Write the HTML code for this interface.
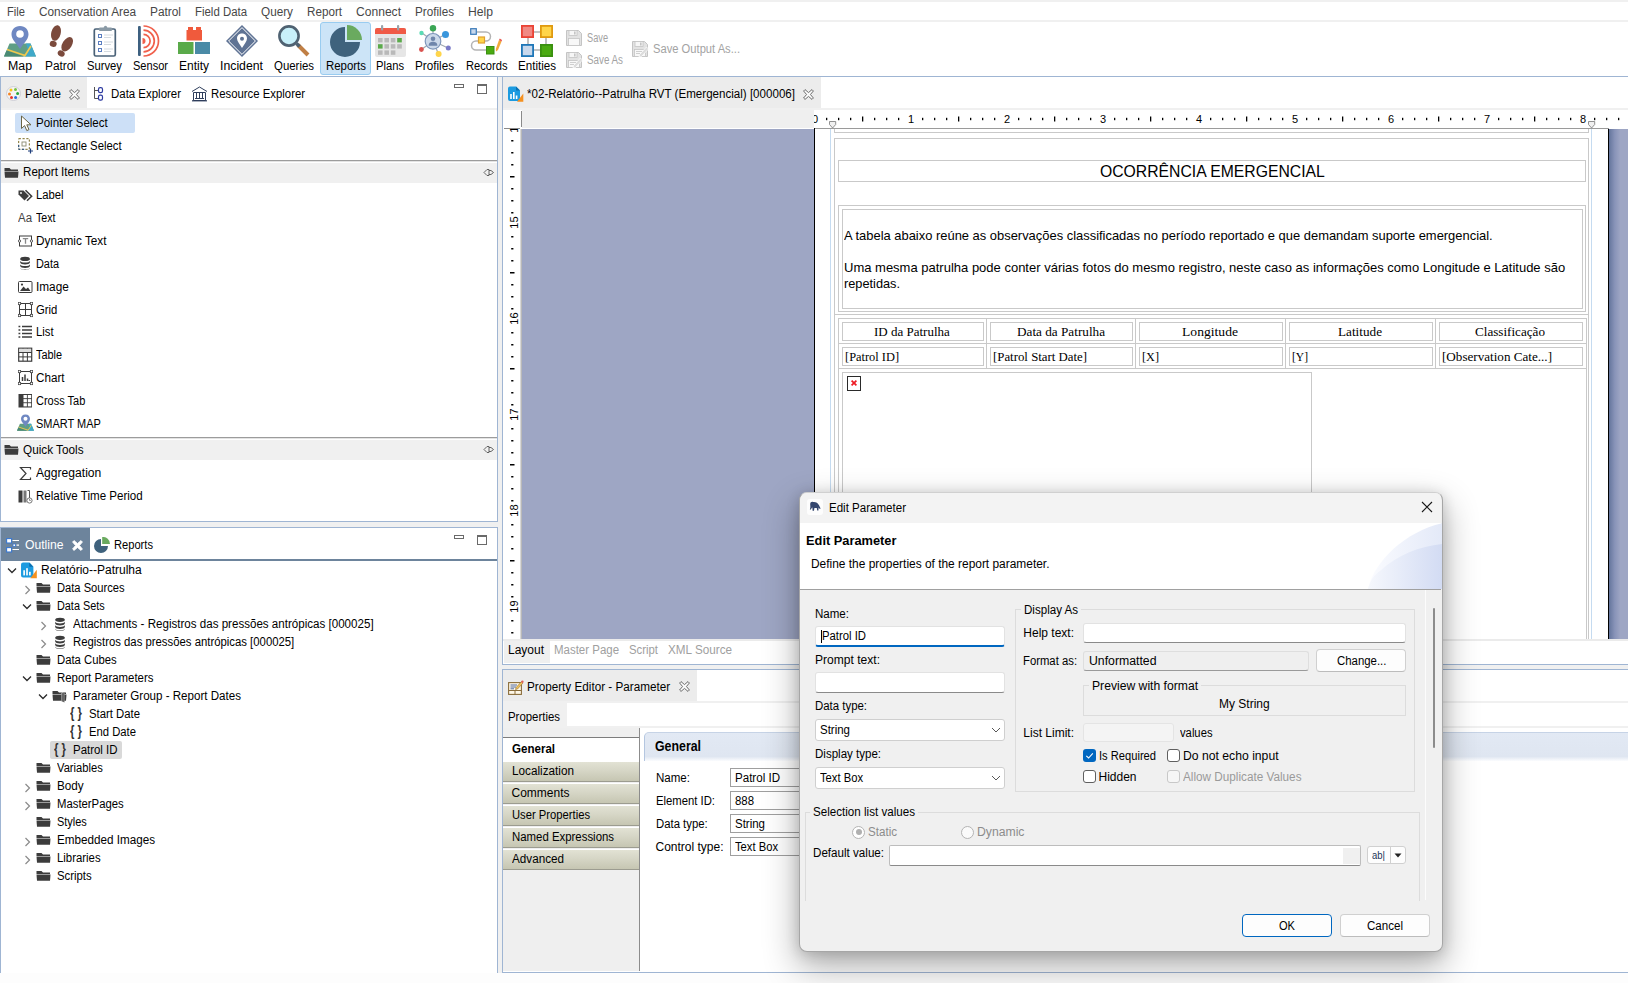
<!DOCTYPE html>
<html><head><meta charset="utf-8"><title>SMART</title><style>
html,body{margin:0;padding:0}
body{width:1628px;height:983px;overflow:hidden;background:#f0f0f0;font-family:"Liberation Sans",sans-serif;font-size:12px;color:#000;position:relative}
.b{position:absolute;display:block}
.t{position:absolute;white-space:nowrap;line-height:1;transform-origin:0 0;display:block}
</style></head>
<body>
<div class="b" style="left:0px;top:973px;width:1628px;height:10px;background:#fdfdfd"></div>
<div class="b" style="left:0px;top:2px;width:1628px;height:18px;background:#fff"></div>
<div class="b" style="left:0px;top:22px;width:1628px;height:54px;background:#fff"></div>
<div class="b" style="left:0px;top:76px;width:1628px;height:1px;background:#9fb5d3"></div>
<span class="t" style="left:7px;top:6px;color:#474747;transform:scaleX(0.931);">File</span>
<span class="t" style="left:39px;top:6px;color:#474747;transform:scaleX(0.983);">Conservation Area</span>
<span class="t" style="left:150px;top:6px;color:#474747;transform:scaleX(0.989);">Patrol</span>
<span class="t" style="left:195px;top:6px;color:#474747;transform:scaleX(0.951);">Field Data</span>
<span class="t" style="left:261px;top:6px;color:#474747;transform:scaleX(0.979);">Query</span>
<span class="t" style="left:307px;top:6px;color:#474747;transform:scaleX(0.972);">Report</span>
<span class="t" style="left:356px;top:6px;color:#474747;transform:scaleX(1.007);">Connect</span>
<span class="t" style="left:415px;top:6px;color:#474747;transform:scaleX(0.975);">Profiles</span>
<span class="t" style="left:468px;top:6px;color:#474747;transform:scaleX(1.013);">Help</span>
<div class="b" style="left:320px;top:22px;width:51px;height:53px;background:#cce4f7;border:1px solid #99ccf0;border-radius:3px;box-sizing:border-box"></div>
<span class="t" style="left:8px;top:60px;transform:scaleX(1.028);">Map</span>
<span class="t" style="left:45px;top:60px;transform:scaleX(0.989);">Patrol</span>
<span class="t" style="left:87px;top:60px;transform:scaleX(0.937);">Survey</span>
<span class="t" style="left:133px;top:60px;transform:scaleX(0.921);">Sensor</span>
<span class="t" style="left:179px;top:60px;">Entity</span>
<span class="t" style="left:220px;top:60px;transform:scaleX(1.023);">Incident</span>
<span class="t" style="left:274px;top:60px;transform:scaleX(0.952);">Queries</span>
<span class="t" style="left:326px;top:60px;transform:scaleX(0.952);">Reports</span>
<span class="t" style="left:376px;top:60px;transform:scaleX(0.933);">Plans</span>
<span class="t" style="left:415px;top:60px;transform:scaleX(0.975);">Profiles</span>
<span class="t" style="left:465.5px;top:60px;transform:scaleX(0.929);">Records</span>
<span class="t" style="left:518px;top:60px;transform:scaleX(0.966);">Entities</span>
<svg class="b" style="left:4px;top:25px;" width="32" height="32" viewBox="0 0 32 32"><path d="M0 31.5 L5.5 18.5 H26.5 L32 31.5 Z" fill="#5f9e86"/><path d="M22 18.5 H26.5 L32 31.5 H21 L24 25 Z" fill="#3fa9c9"/><path d="M0 31.5 L2.5 25.5 L20 31.5 Z" fill="#4a8a74"/><path d="M3 24.5 L21 30.5 L27 21" fill="none" stroke="#f2c94c" stroke-width="1.7"/><path d="M16 1 C10.5 1 7.5 5 7.5 9.5 C7.5 14.5 13 19 16 24 C19 19 24.5 14.5 24.5 9.5 C24.5 5 21.5 1 16 1 Z" fill="#6f88c2"/><circle cx="16" cy="9" r="3.8" fill="#fff"/></svg>
<svg class="b" style="left:49px;top:25px;" width="24" height="32" viewBox="0 0 24 32"><g fill="#7b4a3c"><ellipse cx="7" cy="8" rx="4.7" ry="8" transform="rotate(14 7 8)"/><ellipse cx="4.2" cy="18.8" rx="3.5" ry="3" transform="rotate(14 4.2 18.8)"/><ellipse cx="18.2" cy="19.3" rx="4.7" ry="8" transform="rotate(32 18.2 19.3)"/><ellipse cx="12.2" cy="28.5" rx="3.6" ry="3" transform="rotate(32 12.2 28.5)"/></g></svg>
<svg class="b" style="left:90px;top:25px;" width="32" height="32" viewBox="0 0 32 32"><rect x="4.3" y="4" width="21" height="27" rx="1.5" fill="#fff" stroke="#4a6278" stroke-width="1.7"/><rect x="9" y="2.5" width="13" height="3.5" rx="1" fill="#8a9aa6"/><circle cx="15.5" cy="2.3" r="1.6" fill="#8a9aa6"/><g fill="#fff" stroke="#5b7ec0" stroke-width="1"><rect x="8.5" y="9.5" width="3" height="3"/><rect x="8.5" y="16.5" width="3" height="3"/><rect x="8.5" y="23.5" width="3" height="3"/></g><g stroke="#d5dbe0" stroke-width="1"><path d="M14 10h9M14 12.5h7M14 17h9M14 19.5h7M14 24h9M14 26.5h7"/></g></svg>
<svg class="b" style="left:138px;top:25px;" width="22" height="32" viewBox="0 0 22 32"><rect x="0" y="1" width="2.8" height="30" rx="1" fill="#3d6080"/><g fill="none" stroke="#f0604c" stroke-width="1.7"><path d="M5.5 1 A15 15 0 0 1 5.5 31"/><path d="M5.5 5.2 A10.8 10.8 0 0 1 5.5 26.8"/><path d="M5.5 9.4 A6.6 6.6 0 0 1 5.5 22.6"/></g><path d="M4.5 13 A3 3 0 0 1 4.5 19 Z" fill="#f0604c"/></svg>
<svg class="b" style="left:178px;top:27px;" width="32" height="27" viewBox="0 0 32 27"><rect x="8.5" y="3" width="15.5" height="10.5" fill="#f05a3c"/><rect x="10" y="0" width="5" height="4" fill="#f05a3c"/><rect x="18" y="0" width="5" height="4" fill="#f05a3c"/><rect x="0" y="15" width="15.5" height="12" fill="#5aaa4a"/><rect x="17" y="15" width="15" height="12" fill="#4a8aa6"/></svg>
<svg class="b" style="left:226px;top:25px;" width="32" height="32" viewBox="0 0 32 32"><path d="M16 0 L32 16 L16 32 L0 16 Z" fill="#5f7394"/><path d="M16 2.6 L29.4 16 L16 29.4 L2.6 16 Z" fill="none" stroke="#fff" stroke-width="1"/><path d="M16 8.5 C12.8 8.5 11 10.8 11 13.5 C11 16.5 14 19.5 16 23 C18 19.5 21 16.5 21 13.5 C21 10.8 19.2 8.5 16 8.5 Z" fill="#fff"/><circle cx="16" cy="13.8" r="2" fill="#5f7394"/></svg>
<svg class="b" style="left:278px;top:25px;" width="32" height="32" viewBox="0 0 32 32"><path d="M20 20 L30 30" stroke="#c07f45" stroke-width="4" stroke-linecap="butt"/><path d="M18.5 18.5 L21.5 21.5" stroke="#4f6272" stroke-width="3.5"/><circle cx="11" cy="11" r="9.6" fill="#c8f0fa" stroke="#4f6272" stroke-width="2.6"/></svg>
<svg class="b" style="left:330px;top:25px;" width="32" height="32" viewBox="0 0 32 32"><path d="M15 17 L15 2 A15 15 0 1 0 30 17 Z" fill="#3f627d"/><path d="M17 15 L17 0 A15 15 0 0 1 32 15 Z" fill="#6aaa5f"/></svg>
<svg class="b" style="left:375px;top:25px;" width="31" height="32" viewBox="0 0 31 32"><rect x="0" y="3" width="31" height="29" rx="2" fill="#e6e6e6"/><path d="M0 9 V5 a2 2 0 0 1 2 -2 H29 a2 2 0 0 1 2 2 V9 Z" fill="#f05a46"/><rect x="6" y="0" width="2.2" height="5.5" rx="1" fill="#9aa3aa"/><rect x="22" y="0" width="2.2" height="5.5" rx="1" fill="#9aa3aa"/><rect x="3" y="13" width="4.6" height="4.4" fill="#b9b9b9"/><rect x="9.4" y="13" width="4.6" height="4.4" fill="#b9b9b9"/><rect x="15.8" y="13" width="4.6" height="4.4" fill="#b9b9b9"/><rect x="22.2" y="13" width="4.6" height="4.4" fill="#5aaa4a"/><rect x="3" y="19.2" width="4.6" height="4.4" fill="#5aaa4a"/><rect x="9.4" y="19.2" width="4.6" height="4.4" fill="#b9b9b9"/><rect x="15.8" y="19.2" width="4.6" height="4.4" fill="#b9b9b9"/><rect x="22.2" y="19.2" width="4.6" height="4.4" fill="#b9b9b9"/><rect x="3" y="25.4" width="4.6" height="4.4" fill="#b9b9b9"/><rect x="9.4" y="25.4" width="4.6" height="4.4" fill="#b9b9b9"/><rect x="15.8" y="25.4" width="4.6" height="4.4" fill="#b9b9b9"/></svg>
<svg class="b" style="left:419px;top:25px;" width="32" height="32" viewBox="0 0 32 32"><g stroke="#a0a8b0" stroke-width="1.2"><path d="M14 16 L14 4M14 16 L26 9.5M14 16 L29 23M14 16 L19.5 29M14 16 L2.5 24.5M14 16 L3 8"/></g><circle cx="14" cy="3.2" r="3.2" fill="#3aa655"/><circle cx="26.5" cy="9.6" r="3.5" fill="#3a96dc"/><circle cx="29.3" cy="23" r="2.5" fill="#7a7ac8"/><circle cx="19.6" cy="29" r="3" fill="#ffd54a"/><circle cx="2.4" cy="24.5" r="2.4" fill="#d9534f"/><circle cx="2.5" cy="8" r="2.2" fill="#5adbb5"/><circle cx="14" cy="16.3" r="7.8" fill="#ccd9ea" stroke="#7d96bb" stroke-width="1.2"/><circle cx="14" cy="13.7" r="2.3" fill="#6f86ab"/><path d="M9.6 20.8 C9.6 17.4 12 16.7 14 16.7 C16 16.7 18.4 17.4 18.4 20.8 Z" fill="#6f86ab"/></svg>
<svg class="b" style="left:470px;top:27.5px;" width="32" height="27" viewBox="0 0 32 27"><path d="M7 4 H16 a4.5 4.5 0 0 1 0 9 H6 a4.5 4.5 0 0 0 0 9 H18" fill="none" stroke="#b4b4b4" stroke-width="1.5"/><rect x="0.7" y="0.7" width="5.6" height="5.6" fill="#c8d8ec" stroke="#3a7ab8" stroke-width="1.2"/><rect x="8.5" y="9" width="6" height="6" fill="#ffd54a" stroke="#e0a030" stroke-width="1.2"/><rect x="16.5" y="18.5" width="7.5" height="7.5" fill="#4aaa10" stroke="#3a9010" stroke-width="1"/><path d="M29 12 L31.5 13.5 L28 22 L26 23.5 L25.8 21 Z" fill="#f2a93b"/><path d="M29 12 L31.5 13.5 L32 12 L29.8 10.6 Z" fill="#e8534a"/></svg>
<svg class="b" style="left:521px;top:25px;" width="32" height="32" viewBox="0 0 32 32"><g stroke="#b0b0b0" stroke-width="1.6"><path d="M7 7 H25M7 25 H25M7 7 V25M25 7 V25"/></g><rect x="0.9" y="0.9" width="11.2" height="11.2" fill="#f08a84" stroke="#ea4335" stroke-width="1.8"/><rect x="19.9" y="0.9" width="11.2" height="11.2" fill="#ffd54a" stroke="#e09a10" stroke-width="1.8"/><rect x="0.9" y="19.9" width="11.2" height="11.2" fill="#c8d8ec" stroke="#1f77b8" stroke-width="1.8"/><rect x="19.9" y="19.9" width="11.2" height="11.2" fill="#4aaa10" stroke="#3a9010" stroke-width="1.8"/></svg>
<svg class="b" style="left:566px;top:30px;" width="16" height="16" viewBox="0 0 16 16"><path d="M0.5 0.5 H12.5 L15.5 3.5 V15.5 H0.5 Z" fill="#e2e2e2" stroke="#c4c4c4"/><rect x="3" y="0.5" width="8" height="5" fill="#f6f6f6" stroke="#c4c4c4" stroke-width="0.8"/><rect x="8" y="1.5" width="1.6" height="3" fill="#c4c4c4"/><rect x="2.5" y="8.5" width="11" height="7" fill="#f8f8f8" stroke="#c4c4c4" stroke-width="0.8"/></svg>
<svg class="b" style="left:566px;top:52px;" width="17" height="16" viewBox="0 0 17 16"><path d="M0.5 0.5 H12.5 L15.5 3.5 V15.5 H0.5 Z" fill="#e2e2e2" stroke="#c4c4c4"/><rect x="3" y="0.5" width="8" height="5" fill="#f6f6f6" stroke="#c4c4c4" stroke-width="0.8"/><rect x="8" y="1.5" width="1.6" height="3" fill="#c4c4c4"/><rect x="2.5" y="8.5" width="11" height="7" fill="#f8f8f8" stroke="#c4c4c4" stroke-width="0.8"/><path d="M14.5 6 L16.5 8 L9.5 15.5 L7 16 L7.5 13.5 Z" fill="#dcdcdc" stroke="#fff" stroke-width="0.7"/><path d="M4 10.5h6M4 12.5h4" stroke="#c4c4c4" stroke-width="0.8"/></svg>
<svg class="b" style="left:632px;top:41px;" width="17" height="16" viewBox="0 0 17 16"><path d="M0.5 0.5 H12.5 L15.5 3.5 V15.5 H0.5 Z" fill="#e2e2e2" stroke="#c4c4c4"/><rect x="3" y="0.5" width="8" height="5" fill="#f6f6f6" stroke="#c4c4c4" stroke-width="0.8"/><rect x="8" y="1.5" width="1.6" height="3" fill="#c4c4c4"/><rect x="2.5" y="8.5" width="11" height="7" fill="#f8f8f8" stroke="#c4c4c4" stroke-width="0.8"/><path d="M14.5 6 L16.5 8 L9.5 15.5 L7 16 L7.5 13.5 Z" fill="#dcdcdc" stroke="#fff" stroke-width="0.7"/><path d="M4 10.5h6M4 12.5h4" stroke="#c4c4c4" stroke-width="0.8"/></svg>
<span class="t" style="left:587px;top:32px;color:#a3a3a3;transform:scaleX(0.768);">Save</span>
<span class="t" style="left:587px;top:54px;color:#a3a3a3;transform:scaleX(0.818);">Save As</span>
<span class="t" style="left:652.5px;top:43px;color:#a3a3a3;transform:scaleX(0.932);">Save Output As...</span>
<div class="b" style="left:0px;top:77px;width:498px;height:445px;background:#fff;border:1px solid #9fb5d3;border-top:none;box-sizing:border-box"></div>
<div class="b" style="left:1px;top:77px;width:86px;height:31px;background:#ececec"></div>
<div class="b" style="left:1px;top:108px;width:496px;height:2px;background:#f0f0f0"></div>
<svg class="b" style="left:6px;top:86px;" width="15" height="15" viewBox="0 0 15 15"><circle cx="7.5" cy="7.5" r="7" fill="#f4f4f4" stroke="#c8c8d0" stroke-width="0.8"/><circle cx="5" cy="4" r="1.5" fill="#f5c518"/><circle cx="9.5" cy="3.6" r="1.5" fill="#7ac143"/><circle cx="11.6" cy="7.6" r="1.5" fill="#2aa83a"/><circle cx="3.5" cy="8" r="1.5" fill="#f58220"/><circle cx="5.5" cy="11.6" r="1.5" fill="#e5352b"/><circle cx="9.6" cy="11.6" r="1.5" fill="#2a6fdb"/></svg>
<span class="t" style="left:25px;top:88px;transform:scaleX(0.964);">Palette</span>
<svg class="b" style="left:68.5px;top:89px;" width="11" height="11" viewBox="0 0 11 11"><path d="M0.6 2 L2 0.6 L5.5 3.6 L9 0.6 L10.4 2 L7.4 5.5 L10.4 9 L9 10.4 L5.5 7.4 L2 10.4 L0.6 9 L3.6 5.5 Z" fill="#fff" stroke="#5a5a5a" stroke-width="0.9" stroke-linejoin="round"/></svg>
<svg class="b" style="left:93px;top:86px;" width="12" height="15" viewBox="0 0 12 15"><path d="M1.5 1 V12.5 H5M1.5 4.5 H5" fill="none" stroke="#555" stroke-width="1"/><rect x="5.5" y="1.7" width="4" height="5" rx="1.6" fill="#fff" stroke="#2d3aa0" stroke-width="1.2"/><rect x="5.5" y="9.2" width="4" height="5" rx="1.6" fill="#fff" stroke="#2d3aa0" stroke-width="1.2"/></svg>
<span class="t" style="left:111px;top:88px;transform:scaleX(0.954);">Data Explorer</span>
<svg class="b" style="left:191px;top:85px;" width="17" height="17" viewBox="0 0 17 17"><path d="M1 6.5 L8.5 2 L16 6.5" fill="none" stroke="#2f3e5c" stroke-width="1"/><path d="M2.5 7.5 H14.5 V15.5 H2.5 Z M5.5 8 V13M8.5 8 V13M11.5 8 V13M4 13.5 H13" fill="none" stroke="#2f3e5c" stroke-width="1"/><path d="M1 15.8 H16" stroke="#2f3e5c" stroke-width="1.2"/></svg>
<span class="t" style="left:211px;top:88px;transform:scaleX(0.946);">Resource Explorer</span>
<div class="b" style="left:454px;top:84px;width:10px;height:4px;border:1px solid #6a6a6a;box-sizing:border-box"></div>
<div class="b" style="left:477px;top:84px;width:10px;height:10px;border:1px solid #6a6a6a;border-top-width:2px;box-sizing:border-box"></div>
<div class="b" style="left:15px;top:113px;width:120px;height:20px;background:#cde0f7;border-radius:2px"></div>
<svg class="b" style="left:20px;top:115px;" width="12" height="17" viewBox="0 0 12 17"><path d="M1.5 1 V13.5 L4.6 10.6 L6.8 15.6 L9 14.6 L6.8 9.8 H11 Z" fill="#fff" stroke="#6b6545" stroke-width="1"/></svg>
<span class="t" style="left:36.3px;top:117px;transform:scaleX(0.960);">Pointer Select</span>
<svg class="b" style="left:18px;top:138px;" width="16" height="17" viewBox="0 0 16 17"><rect x="0.7" y="0.7" width="10.6" height="10.6" fill="none" stroke="#7a6a20" stroke-width="1" stroke-dasharray="2.2 1.6"/><path d="M0.7 7 V11.3 H8" fill="none" stroke="#1f4e8c" stroke-width="1" stroke-dasharray="2.2 1.6"/><rect x="4" y="4" width="4" height="4" fill="#fff" stroke="#8a8a70" stroke-width="0.9"/><path d="M12.5 10.5 V15.5M10 13 H15" stroke="#1f3e7c" stroke-width="1.2"/></svg>
<span class="t" style="left:36.3px;top:140px;transform:scaleX(0.943);">Rectangle Select</span>
<div class="b" style="left:1px;top:160px;width:496px;height:1px;background:#9c9c9c"></div>
<div class="b" style="left:1px;top:161px;width:496px;height:1px;background:#e3e3e3"></div>
<div class="b" style="left:1px;top:163px;width:496px;height:20px;background:#f0f0f0"></div>
<svg class="b" style="left:3.5px;top:165px;" width="16" height="16" viewBox="0 0 16 16"><path d="M0.5 3 H5.5 L7 4.5 H14 V6 H0.5 Z" fill="#3c3c3c"/><path d="M0.5 6.5 H14.5 L14 12.7 H1 Z" fill="#3c3c3c"/></svg>
<span class="t" style="left:22.5px;top:166px;transform:scaleX(0.968);">Report Items</span>
<svg class="b" style="left:483px;top:168px;" width="12" height="9" viewBox="0 0 12 9"><path d="M1 4.5 L4 1.5 H6 V7.5 H4 Z M6 2.5 H8 L10.5 4.5 L8 6.5 H6" fill="none" stroke="#555" stroke-width="0.9"/></svg>
<span class="t" style="left:36.3px;top:189px;transform:scaleX(0.940);">Label</span>
<svg class="b" style="left:18px;top:187px;" width="15" height="16" viewBox="0 0 15 16"><path d="M0.5 3.5 H5.5 L11 9 L6.5 13.5 L0.5 7.5 Z" fill="#3c3c3c"/><path d="M7.5 3.2 L13.6 9.2 L9 13.8" fill="none" stroke="#3c3c3c" stroke-width="1.6"/><circle cx="3" cy="6" r="0.9" fill="#fff"/></svg>
<span class="t" style="left:36.3px;top:212px;transform:scaleX(0.886);">Text</span>
<span class="t" style="left:18px;top:212px;color:#444;transform:scaleX(0.954);">Aa</span>
<span class="t" style="left:36.3px;top:235px;transform:scaleX(0.982);">Dynamic Text</span>
<svg class="b" style="left:18px;top:233px;" width="15" height="16" viewBox="0 0 15 16"><rect x="1.5" y="3" width="12" height="10" fill="#fff" stroke="#3c3c3c" stroke-width="1"/><path d="M4.8 5.6 H10.2 M7.5 5.6 V10.8" stroke="#888" stroke-width="1.3"/><circle cx="1.5" cy="8" r="1.2" fill="#fff" stroke="#3c3c3c" stroke-width="0.8"/><circle cx="13.5" cy="8" r="1.2" fill="#fff" stroke="#3c3c3c" stroke-width="0.8"/></svg>
<span class="t" style="left:36.3px;top:258px;transform:scaleX(0.908);">Data</span>
<svg class="b" style="left:18px;top:256px;" width="15" height="16" viewBox="0 0 17 18"><g fill="#3c3c3c"><ellipse cx="8" cy="3.2" rx="5.5" ry="2.4"/><path d="M2.5 5.2 C2.5 8 13.5 8 13.5 5.2 V7.4 C13.5 10.2 2.5 10.2 2.5 7.4 Z"/><path d="M2.5 9.2 C2.5 12 13.5 12 13.5 9.2 V11.4 C13.5 14.2 2.5 14.2 2.5 11.4 Z"/><path d="M2.5 13.2 C2.5 16 13.5 16 13.5 13.2 V13.6 C13.5 16.6 2.5 16.6 2.5 13.6 Z"/></g></svg>
<span class="t" style="left:36.3px;top:281px;transform:scaleX(0.984);">Image</span>
<svg class="b" style="left:18px;top:279px;" width="15" height="16" viewBox="0 0 15 16"><rect x="0.5" y="2.5" width="13.5" height="11" rx="1" fill="#fff" stroke="#3c3c3c" stroke-width="1"/><path d="M2 12 L5.5 7.5 L8 10 L10 8.5 L12.5 12 Z" fill="#3c3c3c"/><circle cx="4" cy="5.6" r="1.1" fill="#3c3c3c"/></svg>
<span class="t" style="left:36.3px;top:304px;transform:scaleX(0.939);">Grid</span>
<svg class="b" style="left:18px;top:302px;" width="15" height="16" viewBox="0 0 15 16"><path d="M1.5 1.5 H13.5 V13.5 H1.5 Z M7.5 1.5 V13.5 M1.5 7.5 H13.5" fill="none" stroke="#3c3c3c" stroke-width="1"/><rect x="0.30000000000000004" y="0.30000000000000004" width="2.4" height="2.4" fill="#fff" stroke="#3c3c3c" stroke-width="0.7"/><rect x="0.30000000000000004" y="12.3" width="2.4" height="2.4" fill="#fff" stroke="#3c3c3c" stroke-width="0.7"/><rect x="12.3" y="0.30000000000000004" width="2.4" height="2.4" fill="#fff" stroke="#3c3c3c" stroke-width="0.7"/><rect x="12.3" y="12.3" width="2.4" height="2.4" fill="#fff" stroke="#3c3c3c" stroke-width="0.7"/></svg>
<span class="t" style="left:36.3px;top:326px;transform:scaleX(0.943);">List</span>
<svg class="b" style="left:18px;top:324px;" width="15" height="16" viewBox="0 0 15 16"><path d="M4 2.5 H14 M4 6 H14 M4 9.5 H14 M4 13 H14" stroke="#3c3c3c" stroke-width="1.4"/><path d="M0.5 2.5 H2.3 M0.5 6 H2.3 M0.5 9.5 H2.3 M0.5 13 H2.3" stroke="#3c3c3c" stroke-width="1.4"/></svg>
<span class="t" style="left:36.3px;top:349px;transform:scaleX(0.906);">Table</span>
<svg class="b" style="left:18px;top:347px;" width="15" height="16" viewBox="0 0 15 16"><rect x="0.7" y="1.2" width="13" height="13" fill="#fff" stroke="#3c3c3c" stroke-width="1.2"/><path d="M5 1.2 V14.2 M9.4 1.2 V14.2 M0.7 5.5 H13.7 M0.7 9.9 H13.7" stroke="#3c3c3c" stroke-width="1"/><rect x="1.3" y="1.8" width="11.8" height="3.2" fill="#ddd"/></svg>
<span class="t" style="left:36.3px;top:372px;transform:scaleX(0.971);">Chart</span>
<svg class="b" style="left:18px;top:370px;" width="15" height="16" viewBox="0 0 15 16"><path d="M1.5 1.5 H13.5 V13.5 H1.5 Z" fill="none" stroke="#3c3c3c" stroke-width="1"/><path d="M4.5 11 V7 M7 11 V4.5 M9.5 11 V8.5 M11.3 11 V10" stroke="#3c3c3c" stroke-width="1.5"/><rect x="0.30000000000000004" y="0.30000000000000004" width="2.4" height="2.4" fill="#fff" stroke="#3c3c3c" stroke-width="0.7"/><rect x="0.30000000000000004" y="12.3" width="2.4" height="2.4" fill="#fff" stroke="#3c3c3c" stroke-width="0.7"/><rect x="12.3" y="0.30000000000000004" width="2.4" height="2.4" fill="#fff" stroke="#3c3c3c" stroke-width="0.7"/><rect x="12.3" y="12.3" width="2.4" height="2.4" fill="#fff" stroke="#3c3c3c" stroke-width="0.7"/></svg>
<span class="t" style="left:36.3px;top:395px;transform:scaleX(0.916);">Cross Tab</span>
<svg class="b" style="left:18px;top:393px;" width="15" height="16" viewBox="0 0 15 16"><rect x="0.5" y="1" width="13.5" height="13.5" fill="#3c3c3c"/><g fill="#fff"><rect x="5.5" y="2" width="3.4" height="3.2"/><rect x="9.8" y="2" width="3.4" height="3.2"/><rect x="5.5" y="6.1" width="3.4" height="3.2"/><rect x="9.8" y="6.1" width="3.4" height="3.2"/><rect x="5.5" y="10.2" width="3.4" height="3.2"/><rect x="9.8" y="10.2" width="3.4" height="3.2"/></g></svg>
<span class="t" style="left:36.3px;top:418px;transform:scaleX(0.914);">SMART MAP</span>
<svg class="b" style="left:17px;top:414px;" width="17" height="17" viewBox="3 0 26 32"><path d="M0 31.5 L5.5 18.5 H26.5 L32 31.5 Z" fill="#5f9e86"/><path d="M22 18.5 H26.5 L32 31.5 H21 L24 25 Z" fill="#3fa9c9"/><path d="M0 31.5 L2.5 25.5 L20 31.5 Z" fill="#4a8a74"/><path d="M3 24.5 L21 30.5 L27 21" fill="none" stroke="#f2c94c" stroke-width="1.7"/><path d="M16 1 C10.5 1 7.5 5 7.5 9.5 C7.5 14.5 13 19 16 24 C19 19 24.5 14.5 24.5 9.5 C24.5 5 21.5 1 16 1 Z" fill="#6f88c2"/><circle cx="16" cy="9" r="3.8" fill="#fff"/></svg>
<div class="b" style="left:1px;top:437px;width:496px;height:1px;background:#9c9c9c"></div>
<div class="b" style="left:1px;top:438px;width:496px;height:1px;background:#e3e3e3"></div>
<div class="b" style="left:1px;top:440px;width:496px;height:20px;background:#f0f0f0"></div>
<svg class="b" style="left:3.5px;top:442px;" width="16" height="16" viewBox="0 0 16 16"><path d="M0.5 3 H5.5 L7 4.5 H14 V6 H0.5 Z" fill="#3c3c3c"/><path d="M0.5 6.5 H14.5 L14 12.7 H1 Z" fill="#3c3c3c"/></svg>
<span class="t" style="left:22.5px;top:444px;transform:scaleX(0.979);">Quick Tools</span>
<svg class="b" style="left:483px;top:445px;" width="12" height="9" viewBox="0 0 12 9"><path d="M1 4.5 L4 1.5 H6 V7.5 H4 Z M6 2.5 H8 L10.5 4.5 L8 6.5 H6" fill="none" stroke="#555" stroke-width="0.9"/></svg>
<svg class="b" style="left:19px;top:466px;" width="13" height="15" viewBox="0 0 13 15"><path d="M11.5 3.5 V1.5 H1.5 L7 7.5 L1.5 13.5 H11.5 V11.5" fill="none" stroke="#3c3c3c" stroke-width="1.2"/></svg>
<span class="t" style="left:36.3px;top:467px;transform:scaleX(1.009);">Aggregation</span>
<svg class="b" style="left:18px;top:490px;" width="15" height="14" viewBox="0 0 15 14"><rect x="0.5" y="0.5" width="4" height="12" fill="#3c3c3c"/><rect x="5.5" y="0.5" width="3" height="12" fill="#777"/><path d="M9.5 0.5 H11.5 V8" fill="none" stroke="#555" stroke-width="1"/><circle cx="11.5" cy="10.5" r="2.6" fill="#fff" stroke="#666" stroke-width="0.9"/><path d="M11.5 9 V10.5 H12.8" stroke="#666" stroke-width="0.7" fill="none"/></svg>
<span class="t" style="left:36.3px;top:490px;transform:scaleX(0.964);">Relative Time Period</span>
<div class="b" style="left:0px;top:527px;width:498px;height:446px;background:#fff;border:1px solid #9fb5d3;border-bottom:none;box-sizing:border-box"></div>
<div class="b" style="left:1px;top:528px;width:89px;height:31px;background:#6d849c"></div>
<div class="b" style="left:1px;top:559px;width:496px;height:2px;background:#6d849c"></div>
<svg class="b" style="left:6px;top:538px;" width="14" height="15" viewBox="0 0 14 15"><rect x="0.6" y="0.6" width="5" height="4.4" fill="#fff" stroke="#3a78d0" stroke-width="1.1"/><rect x="0.6" y="9.6" width="5" height="4.4" fill="#fff" stroke="#3a78d0" stroke-width="1.1"/><rect x="7" y="6" width="2.4" height="2.4" fill="#fff" stroke="#3a78d0" stroke-width="0.8"/><path d="M6.5 2.5 H13 M10.5 7.2 H13 M6.5 11.5 H13" stroke="#fff" stroke-width="1.2"/></svg>
<span class="t" style="left:25px;top:539px;color:#fff;transform:scaleX(1.013);">Outline</span>
<svg class="b" style="left:72px;top:539.5px;" width="11" height="11" viewBox="0 0 11 11"><path d="M0.6 2 L2 0.6 L5.5 3.6 L9 0.6 L10.4 2 L7.4 5.5 L10.4 9 L9 10.4 L5.5 7.4 L2 10.4 L0.6 9 L3.6 5.5 Z" fill="#fff" stroke="#fff" stroke-width="0.9" stroke-linejoin="round"/></svg>
<svg class="b" style="left:94px;top:537px;" width="17" height="17" viewBox="0 0 17 17"><path d="M7 9 L7 2 A7 7 0 1 0 14 9 Z" fill="#3f627d"/><path d="M8.2 7 L8.2 0 A7 7 0 0 1 16 7 Z" fill="#6aaa5f"/></svg>
<span class="t" style="left:114px;top:539px;transform:scaleX(0.928);">Reports</span>
<div class="b" style="left:454px;top:535px;width:10px;height:4px;border:1px solid #6a6a6a;box-sizing:border-box"></div>
<div class="b" style="left:477px;top:535px;width:10px;height:10px;border:1px solid #6a6a6a;border-top-width:2px;box-sizing:border-box"></div>
<svg class="b" style="left:6.5px;top:565px;" width="10" height="10" viewBox="0 0 10 10"><path d="M1 3.5 L5 7.5 L9 3.5" fill="none" stroke="#2a2a2a" stroke-width="1.3"/></svg>
<svg class="b" style="left:20px;top:562px;" width="17" height="17" viewBox="0 0 16.5 16.5"><path d="M1 2.5 a2 2 0 0 1 2 -2 H9 L13 4.5 V13 a2 2 0 0 1 -2 2 H3 a2 2 0 0 1 -2 -2 Z" fill="#1c9be0"/><path d="M9 0.5 L13 4.5 H9 Z" fill="#0b6fb0"/><g fill="#fff"><rect x="3.2" y="8" width="1.6" height="5"/><rect x="6" y="6" width="1.6" height="7"/><rect x="8.8" y="9.5" width="1.6" height="3.5"/></g><path d="M16.3 7.5 V15.8 H10 Z" fill="#f59120"/></svg>
<span class="t" style="left:41px;top:564px;">Relatório--Patrulha</span>
<svg class="b" style="left:23px;top:585px;" width="10" height="10" viewBox="0 0 10 10"><path d="M2.5 1 L6.5 5 L2.5 9" fill="none" stroke="#8a8a8a" stroke-width="1.2"/></svg>
<svg class="b" style="left:36px;top:580px;" width="16" height="16" viewBox="0 0 16 16"><path d="M0.5 3 H5.5 L7 4.5 H14 V6 H0.5 Z" fill="#3c3c3c"/><path d="M0.5 6.5 H14.5 L14 12.7 H1 Z" fill="#3c3c3c"/></svg>
<span class="t" style="left:57px;top:582px;transform:scaleX(0.930);">Data Sources</span>
<svg class="b" style="left:22.3px;top:601px;" width="10" height="10" viewBox="0 0 10 10"><path d="M1 3.5 L5 7.5 L9 3.5" fill="none" stroke="#2a2a2a" stroke-width="1.3"/></svg>
<svg class="b" style="left:36px;top:598px;" width="16" height="16" viewBox="0 0 16 16"><path d="M0.5 3 H5.5 L7 4.5 H14 V6 H0.5 Z" fill="#3c3c3c"/><path d="M0.5 6.5 H14.5 L14 12.7 H1 Z" fill="#3c3c3c"/></svg>
<span class="t" style="left:57px;top:600px;transform:scaleX(0.904);">Data Sets</span>
<svg class="b" style="left:39px;top:621px;" width="10" height="10" viewBox="0 0 10 10"><path d="M2.5 1 L6.5 5 L2.5 9" fill="none" stroke="#8a8a8a" stroke-width="1.2"/></svg>
<svg class="b" style="left:52.5px;top:617px;" width="14" height="15" viewBox="0 0 16 17"><g fill="#3c3c3c"><ellipse cx="8" cy="3.2" rx="5.5" ry="2.4"/><path d="M2.5 5.2 C2.5 8 13.5 8 13.5 5.2 V7.4 C13.5 10.2 2.5 10.2 2.5 7.4 Z"/><path d="M2.5 9.2 C2.5 12 13.5 12 13.5 9.2 V11.4 C13.5 14.2 2.5 14.2 2.5 11.4 Z"/><path d="M2.5 13.2 C2.5 16 13.5 16 13.5 13.2 V13.6 C13.5 16.6 2.5 16.6 2.5 13.6 Z"/></g></svg>
<span class="t" style="left:73px;top:618px;transform:scaleX(0.965);">Attachments - Registros das pressões antrópicas [000025]</span>
<svg class="b" style="left:39px;top:639px;" width="10" height="10" viewBox="0 0 10 10"><path d="M2.5 1 L6.5 5 L2.5 9" fill="none" stroke="#8a8a8a" stroke-width="1.2"/></svg>
<svg class="b" style="left:52.5px;top:635px;" width="14" height="15" viewBox="0 0 16 17"><g fill="#3c3c3c"><ellipse cx="8" cy="3.2" rx="5.5" ry="2.4"/><path d="M2.5 5.2 C2.5 8 13.5 8 13.5 5.2 V7.4 C13.5 10.2 2.5 10.2 2.5 7.4 Z"/><path d="M2.5 9.2 C2.5 12 13.5 12 13.5 9.2 V11.4 C13.5 14.2 2.5 14.2 2.5 11.4 Z"/><path d="M2.5 13.2 C2.5 16 13.5 16 13.5 13.2 V13.6 C13.5 16.6 2.5 16.6 2.5 13.6 Z"/></g></svg>
<span class="t" style="left:73px;top:636px;transform:scaleX(0.945);">Registros das pressões antrópicas [000025]</span>
<svg class="b" style="left:36px;top:652px;" width="16" height="16" viewBox="0 0 16 16"><path d="M0.5 3 H5.5 L7 4.5 H14 V6 H0.5 Z" fill="#3c3c3c"/><path d="M0.5 6.5 H14.5 L14 12.7 H1 Z" fill="#3c3c3c"/></svg>
<span class="t" style="left:57px;top:654px;transform:scaleX(0.941);">Data Cubes</span>
<svg class="b" style="left:22.3px;top:673px;" width="10" height="10" viewBox="0 0 10 10"><path d="M1 3.5 L5 7.5 L9 3.5" fill="none" stroke="#2a2a2a" stroke-width="1.3"/></svg>
<svg class="b" style="left:36px;top:670px;" width="16" height="16" viewBox="0 0 16 16"><path d="M0.5 3 H5.5 L7 4.5 H14 V6 H0.5 Z" fill="#3c3c3c"/><path d="M0.5 6.5 H14.5 L14 12.7 H1 Z" fill="#3c3c3c"/></svg>
<span class="t" style="left:57px;top:672px;transform:scaleX(0.951);">Report Parameters</span>
<svg class="b" style="left:38.3px;top:691px;" width="10" height="10" viewBox="0 0 10 10"><path d="M1 3.5 L5 7.5 L9 3.5" fill="none" stroke="#2a2a2a" stroke-width="1.3"/></svg>
<svg class="b" style="left:52px;top:688px;" width="16" height="16" viewBox="0 0 16 16"><path d="M0.5 3 H5.5 L7 4.5 H14 V6 H0.5 Z" fill="#3c3c3c"/><path d="M0.5 6.5 H14.5 L14 12.7 H1 Z" fill="#3c3c3c"/><path d="M9 5 L12.5 3.5 V14.5 L9 13.5 Z" fill="#fff" opacity="0.55"/><path d="M9.5 5.5 L12.5 4 V14.5 L9.5 13.2 Z" fill="#666"/></svg>
<span class="t" style="left:73px;top:690px;transform:scaleX(0.965);">Parameter Group - Report Dates</span>
<span class="t" style="left:69.5px;top:705px;font-size:15px;color:#333;font-weight:bold;transform:scaleX(0.757);">{ }</span>
<span class="t" style="left:89px;top:708px;transform:scaleX(0.944);">Start Date</span>
<span class="t" style="left:69.5px;top:723px;font-size:15px;color:#333;font-weight:bold;transform:scaleX(0.757);">{ }</span>
<span class="t" style="left:89px;top:726px;transform:scaleX(0.940);">End Date</span>
<div class="b" style="left:50px;top:741px;width:72px;height:18px;background:#d9d9d9;border-radius:2px"></div>
<span class="t" style="left:53.5px;top:741px;font-size:15px;color:#333;font-weight:bold;transform:scaleX(0.757);">{ }</span>
<span class="t" style="left:73px;top:744px;transform:scaleX(0.953);">Patrol ID</span>
<svg class="b" style="left:36px;top:760px;" width="16" height="16" viewBox="0 0 16 16"><path d="M0.5 3 H5.5 L7 4.5 H14 V6 H0.5 Z" fill="#3c3c3c"/><path d="M0.5 6.5 H14.5 L14 12.7 H1 Z" fill="#3c3c3c"/></svg>
<span class="t" style="left:57px;top:762px;transform:scaleX(0.932);">Variables</span>
<svg class="b" style="left:23px;top:783px;" width="10" height="10" viewBox="0 0 10 10"><path d="M2.5 1 L6.5 5 L2.5 9" fill="none" stroke="#8a8a8a" stroke-width="1.2"/></svg>
<svg class="b" style="left:36px;top:778px;" width="16" height="16" viewBox="0 0 16 16"><path d="M0.5 3 H5.5 L7 4.5 H14 V6 H0.5 Z" fill="#3c3c3c"/><path d="M0.5 6.5 H14.5 L14 12.7 H1 Z" fill="#3c3c3c"/></svg>
<span class="t" style="left:57px;top:780px;transform:scaleX(0.976);">Body</span>
<svg class="b" style="left:23px;top:801px;" width="10" height="10" viewBox="0 0 10 10"><path d="M2.5 1 L6.5 5 L2.5 9" fill="none" stroke="#8a8a8a" stroke-width="1.2"/></svg>
<svg class="b" style="left:36px;top:796px;" width="16" height="16" viewBox="0 0 16 16"><path d="M0.5 3 H5.5 L7 4.5 H14 V6 H0.5 Z" fill="#3c3c3c"/><path d="M0.5 6.5 H14.5 L14 12.7 H1 Z" fill="#3c3c3c"/></svg>
<span class="t" style="left:57px;top:798px;transform:scaleX(0.944);">MasterPages</span>
<svg class="b" style="left:36px;top:814px;" width="16" height="16" viewBox="0 0 16 16"><path d="M0.5 3 H5.5 L7 4.5 H14 V6 H0.5 Z" fill="#3c3c3c"/><path d="M0.5 6.5 H14.5 L14 12.7 H1 Z" fill="#3c3c3c"/></svg>
<span class="t" style="left:57px;top:816px;transform:scaleX(0.912);">Styles</span>
<svg class="b" style="left:23px;top:837px;" width="10" height="10" viewBox="0 0 10 10"><path d="M2.5 1 L6.5 5 L2.5 9" fill="none" stroke="#8a8a8a" stroke-width="1.2"/></svg>
<svg class="b" style="left:36px;top:832px;" width="16" height="16" viewBox="0 0 16 16"><path d="M0.5 3 H5.5 L7 4.5 H14 V6 H0.5 Z" fill="#3c3c3c"/><path d="M0.5 6.5 H14.5 L14 12.7 H1 Z" fill="#3c3c3c"/></svg>
<span class="t" style="left:57px;top:834px;transform:scaleX(0.973);">Embedded Images</span>
<svg class="b" style="left:23px;top:855px;" width="10" height="10" viewBox="0 0 10 10"><path d="M2.5 1 L6.5 5 L2.5 9" fill="none" stroke="#8a8a8a" stroke-width="1.2"/></svg>
<svg class="b" style="left:36px;top:850px;" width="16" height="16" viewBox="0 0 16 16"><path d="M0.5 3 H5.5 L7 4.5 H14 V6 H0.5 Z" fill="#3c3c3c"/><path d="M0.5 6.5 H14.5 L14 12.7 H1 Z" fill="#3c3c3c"/></svg>
<span class="t" style="left:57px;top:852px;transform:scaleX(0.947);">Libraries</span>
<svg class="b" style="left:36px;top:868px;" width="16" height="16" viewBox="0 0 16 16"><path d="M0.5 3 H5.5 L7 4.5 H14 V6 H0.5 Z" fill="#3c3c3c"/><path d="M0.5 6.5 H14.5 L14 12.7 H1 Z" fill="#3c3c3c"/></svg>
<span class="t" style="left:57px;top:870px;transform:scaleX(0.946);">Scripts</span>
<div class="b" style="left:502px;top:77px;width:1130px;height:588px;background:#fff;border:1px solid #9fb5d3;border-top:none;box-sizing:border-box"></div>
<div class="b" style="left:503px;top:77px;width:318px;height:31px;background:#ececec"></div>
<div class="b" style="left:503px;top:108px;width:1125px;height:2px;background:#f0f0f0"></div>
<svg class="b" style="left:507px;top:86px;" width="16.5" height="16.5" viewBox="0 0 16.5 16.5"><path d="M1 2.5 a2 2 0 0 1 2 -2 H9 L13 4.5 V13 a2 2 0 0 1 -2 2 H3 a2 2 0 0 1 -2 -2 Z" fill="#1c9be0"/><path d="M9 0.5 L13 4.5 H9 Z" fill="#0b6fb0"/><g fill="#fff"><rect x="3.2" y="8" width="1.6" height="5"/><rect x="6" y="6" width="1.6" height="7"/><rect x="8.8" y="9.5" width="1.6" height="3.5"/></g><path d="M16.3 7.5 V15.8 H10 Z" fill="#f59120"/></svg>
<span class="t" style="left:526.5px;top:88px;transform:scaleX(0.965);">*02-Relatório--Patrulha RVT (Emergencial) [000006]</span>
<svg class="b" style="left:802.5px;top:89px;" width="11" height="11" viewBox="0 0 11 11"><path d="M0.6 2 L2 0.6 L5.5 3.6 L9 0.6 L10.4 2 L7.4 5.5 L10.4 9 L9 10.4 L5.5 7.4 L2 10.4 L0.6 9 L3.6 5.5 Z" fill="#fff" stroke="#5a5a5a" stroke-width="0.9" stroke-linejoin="round"/></svg>
<div class="b" style="left:522px;top:110px;width:292px;height:18px;background:#efefef"></div>
<div class="b" style="left:521px;top:111px;width:1px;height:16px;background:#8a8a8a"></div>
<div class="b" style="left:504px;top:128px;width:16px;height:1px;background:#8a8a8a"></div>
<div class="b" style="left:520px;top:129px;width:2px;height:510px;background:linear-gradient(90deg,#e8e8e8,#a8a8a8)"></div>
<svg class="b" style="left:504px;top:129px;overflow:hidden" width="16" height="510" viewBox="0 0 16 510"><rect x="7.2" y="11" width="2.2" height="1.5" fill="#000"/><rect x="7.2" y="23" width="2.2" height="1.5" fill="#000"/><rect x="7.2" y="35" width="2.2" height="1.5" fill="#000"/><rect x="6" y="47" width="4.5" height="1.5" fill="#000"/><rect x="7.2" y="59" width="2.2" height="1.5" fill="#000"/><rect x="7.2" y="71" width="2.2" height="1.5" fill="#000"/><rect x="7.2" y="83" width="2.2" height="1.5" fill="#000"/><rect x="7.2" y="107" width="2.2" height="1.5" fill="#000"/><rect x="7.2" y="119" width="2.2" height="1.5" fill="#000"/><rect x="7.2" y="131" width="2.2" height="1.5" fill="#000"/><rect x="6" y="143" width="4.5" height="1.5" fill="#000"/><rect x="7.2" y="155" width="2.2" height="1.5" fill="#000"/><rect x="7.2" y="167" width="2.2" height="1.5" fill="#000"/><rect x="7.2" y="179" width="2.2" height="1.5" fill="#000"/><rect x="7.2" y="203" width="2.2" height="1.5" fill="#000"/><rect x="7.2" y="215" width="2.2" height="1.5" fill="#000"/><rect x="7.2" y="227" width="2.2" height="1.5" fill="#000"/><rect x="6" y="239" width="4.5" height="1.5" fill="#000"/><rect x="7.2" y="251" width="2.2" height="1.5" fill="#000"/><rect x="7.2" y="263" width="2.2" height="1.5" fill="#000"/><rect x="7.2" y="275" width="2.2" height="1.5" fill="#000"/><rect x="7.2" y="299" width="2.2" height="1.5" fill="#000"/><rect x="7.2" y="311" width="2.2" height="1.5" fill="#000"/><rect x="7.2" y="323" width="2.2" height="1.5" fill="#000"/><rect x="6" y="335" width="4.5" height="1.5" fill="#000"/><rect x="7.2" y="347" width="2.2" height="1.5" fill="#000"/><rect x="7.2" y="359" width="2.2" height="1.5" fill="#000"/><rect x="7.2" y="371" width="2.2" height="1.5" fill="#000"/><rect x="7.2" y="395" width="2.2" height="1.5" fill="#000"/><rect x="7.2" y="407" width="2.2" height="1.5" fill="#000"/><rect x="7.2" y="419" width="2.2" height="1.5" fill="#000"/><rect x="6" y="431" width="4.5" height="1.5" fill="#000"/><rect x="7.2" y="443" width="2.2" height="1.5" fill="#000"/><rect x="7.2" y="455" width="2.2" height="1.5" fill="#000"/><rect x="7.2" y="467" width="2.2" height="1.5" fill="#000"/><rect x="7.2" y="491" width="2.2" height="1.5" fill="#000"/><rect x="7.2" y="503" width="2.2" height="1.5" fill="#000"/><text x="0" y="0" font-family="Liberation Sans" font-size="11" text-anchor="middle" transform="translate(13.5 -2.5) rotate(-90)">14</text><text x="0" y="0" font-family="Liberation Sans" font-size="11" text-anchor="middle" transform="translate(13.5 93.5) rotate(-90)">15</text><text x="0" y="0" font-family="Liberation Sans" font-size="11" text-anchor="middle" transform="translate(13.5 189.5) rotate(-90)">16</text><text x="0" y="0" font-family="Liberation Sans" font-size="11" text-anchor="middle" transform="translate(13.5 285.5) rotate(-90)">17</text><text x="0" y="0" font-family="Liberation Sans" font-size="11" text-anchor="middle" transform="translate(13.5 381.5) rotate(-90)">18</text><text x="0" y="0" font-family="Liberation Sans" font-size="11" text-anchor="middle" transform="translate(13.5 477.5) rotate(-90)">19</text></svg>
<div class="b" style="left:522px;top:129px;width:292px;height:510px;background:#9ea6c4"></div>
<div class="b" style="left:814px;top:128px;width:1px;height:511px;background:#000"></div>
<div class="b" style="left:1608px;top:129px;width:1px;height:510px;background:#000"></div>
<div class="b" style="left:1609px;top:129px;width:19px;height:510px;background:linear-gradient(90deg,#64759c,#8893b8 30%,#9ea6c4 60%)"></div>
<svg class="b" style="left:814px;top:110px;overflow:hidden" width="814" height="18" viewBox="0 0 814 18"><rect x="12" y="7.8" width="1.3" height="2.4" fill="#000"/><rect x="24" y="7.8" width="1.3" height="2.4" fill="#000"/><rect x="36" y="7.8" width="1.3" height="2.4" fill="#000"/><rect x="48" y="6.5" width="1.3" height="5" fill="#000"/><rect x="60" y="7.8" width="1.3" height="2.4" fill="#000"/><rect x="72" y="7.8" width="1.3" height="2.4" fill="#000"/><rect x="84" y="7.8" width="1.3" height="2.4" fill="#000"/><text x="97" y="13" font-family="Liberation Sans" font-size="11" text-anchor="middle">1</text><rect x="108" y="7.8" width="1.3" height="2.4" fill="#000"/><rect x="120" y="7.8" width="1.3" height="2.4" fill="#000"/><rect x="132" y="7.8" width="1.3" height="2.4" fill="#000"/><rect x="144" y="6.5" width="1.3" height="5" fill="#000"/><rect x="156" y="7.8" width="1.3" height="2.4" fill="#000"/><rect x="168" y="7.8" width="1.3" height="2.4" fill="#000"/><rect x="180" y="7.8" width="1.3" height="2.4" fill="#000"/><text x="193" y="13" font-family="Liberation Sans" font-size="11" text-anchor="middle">2</text><rect x="204" y="7.8" width="1.3" height="2.4" fill="#000"/><rect x="216" y="7.8" width="1.3" height="2.4" fill="#000"/><rect x="228" y="7.8" width="1.3" height="2.4" fill="#000"/><rect x="240" y="6.5" width="1.3" height="5" fill="#000"/><rect x="252" y="7.8" width="1.3" height="2.4" fill="#000"/><rect x="264" y="7.8" width="1.3" height="2.4" fill="#000"/><rect x="276" y="7.8" width="1.3" height="2.4" fill="#000"/><text x="289" y="13" font-family="Liberation Sans" font-size="11" text-anchor="middle">3</text><rect x="300" y="7.8" width="1.3" height="2.4" fill="#000"/><rect x="312" y="7.8" width="1.3" height="2.4" fill="#000"/><rect x="324" y="7.8" width="1.3" height="2.4" fill="#000"/><rect x="336" y="6.5" width="1.3" height="5" fill="#000"/><rect x="348" y="7.8" width="1.3" height="2.4" fill="#000"/><rect x="360" y="7.8" width="1.3" height="2.4" fill="#000"/><rect x="372" y="7.8" width="1.3" height="2.4" fill="#000"/><text x="385" y="13" font-family="Liberation Sans" font-size="11" text-anchor="middle">4</text><rect x="396" y="7.8" width="1.3" height="2.4" fill="#000"/><rect x="408" y="7.8" width="1.3" height="2.4" fill="#000"/><rect x="420" y="7.8" width="1.3" height="2.4" fill="#000"/><rect x="432" y="6.5" width="1.3" height="5" fill="#000"/><rect x="444" y="7.8" width="1.3" height="2.4" fill="#000"/><rect x="456" y="7.8" width="1.3" height="2.4" fill="#000"/><rect x="468" y="7.8" width="1.3" height="2.4" fill="#000"/><text x="481" y="13" font-family="Liberation Sans" font-size="11" text-anchor="middle">5</text><rect x="492" y="7.8" width="1.3" height="2.4" fill="#000"/><rect x="504" y="7.8" width="1.3" height="2.4" fill="#000"/><rect x="516" y="7.8" width="1.3" height="2.4" fill="#000"/><rect x="528" y="6.5" width="1.3" height="5" fill="#000"/><rect x="540" y="7.8" width="1.3" height="2.4" fill="#000"/><rect x="552" y="7.8" width="1.3" height="2.4" fill="#000"/><rect x="564" y="7.8" width="1.3" height="2.4" fill="#000"/><text x="577" y="13" font-family="Liberation Sans" font-size="11" text-anchor="middle">6</text><rect x="588" y="7.8" width="1.3" height="2.4" fill="#000"/><rect x="600" y="7.8" width="1.3" height="2.4" fill="#000"/><rect x="612" y="7.8" width="1.3" height="2.4" fill="#000"/><rect x="624" y="6.5" width="1.3" height="5" fill="#000"/><rect x="636" y="7.8" width="1.3" height="2.4" fill="#000"/><rect x="648" y="7.8" width="1.3" height="2.4" fill="#000"/><rect x="660" y="7.8" width="1.3" height="2.4" fill="#000"/><text x="673" y="13" font-family="Liberation Sans" font-size="11" text-anchor="middle">7</text><rect x="684" y="7.8" width="1.3" height="2.4" fill="#000"/><rect x="696" y="7.8" width="1.3" height="2.4" fill="#000"/><rect x="708" y="7.8" width="1.3" height="2.4" fill="#000"/><rect x="720" y="6.5" width="1.3" height="5" fill="#000"/><rect x="732" y="7.8" width="1.3" height="2.4" fill="#000"/><rect x="744" y="7.8" width="1.3" height="2.4" fill="#000"/><rect x="756" y="7.8" width="1.3" height="2.4" fill="#000"/><text x="769" y="13" font-family="Liberation Sans" font-size="11" text-anchor="middle">8</text><rect x="780" y="7.8" width="1.3" height="2.4" fill="#000"/><rect x="792" y="7.8" width="1.3" height="2.4" fill="#000"/><rect x="804" y="7.8" width="1.3" height="2.4" fill="#000"/><text x="1" y="13" font-family="Liberation Sans" font-size="11" text-anchor="middle">0</text><path d="M15.5 11.5 H21.7 V14.5 L18.6 18 L15.5 14.5 Z" fill="#f0f0f0" stroke="#858585" stroke-width="0.9"/><path d="M774.5 11.5 H780.7 V14.5 L777.6 18 L774.5 14.5 Z" fill="#f0f0f0" stroke="#858585" stroke-width="0.9"/></svg>
<div class="b" style="left:815px;top:128px;width:794px;height:1px;background:#9a9a9a"></div>
<div class="b" style="left:830px;top:129px;width:1px;height:510px;background:#c5dbf0"></div>
<div class="b" style="left:1591px;top:129px;width:1px;height:510px;background:#c5dbf0"></div>
<div class="b" style="left:834px;top:129px;width:755px;height:4px;border-left:1px solid #c9c9c9;border-bottom:1px solid #c9c9c9;border-right:1px solid #c9c9c9;box-sizing:border-box"></div>
<div class="b" style="left:834px;top:138px;width:755px;height:501px;border-top:1px solid #c9c9c9;border-left:1px solid #c9c9c9;border-right:1px solid #c9c9c9;box-sizing:border-box"></div>
<div class="b" style="left:838px;top:160px;width:748px;height:22px;border-top:1px solid #c9c9c9;border-left:1px solid #c9c9c9;border-bottom:1px solid #c9c9c9;border-right:1px solid #c9c9c9;box-sizing:border-box"></div>
<span class="t" style="left:1100px;top:164px;font-size:16px;transform:scaleX(0.984);">OCORRÊNCIA EMERGENCIAL</span>
<div class="b" style="left:838px;top:205px;width:748px;height:107px;border-top:1px solid #c9c9c9;border-left:1px solid #c9c9c9;border-bottom:1px solid #c9c9c9;border-right:1px solid #c9c9c9;box-sizing:border-box"></div>
<div class="b" style="left:842px;top:209px;width:741px;height:100px;border-top:1px solid #c9c9c9;border-left:1px solid #c9c9c9;border-bottom:1px solid #c9c9c9;border-right:1px solid #c9c9c9;box-sizing:border-box"></div>
<span class="t" style="left:844px;top:229px;font-size:13px;transform:scaleX(0.994);">A tabela abaixo reúne as observações classificadas no período reportado e que demandam suporte emergencial.</span>
<span class="t" style="left:844px;top:261px;font-size:13px;">Uma mesma patrulha pode conter várias fotos do mesmo registro, neste caso as informações como Longitude e Latitude são</span>
<span class="t" style="left:844px;top:277px;font-size:13px;transform:scaleX(0.981);">repetidas.</span>
<div class="b" style="left:834px;top:314px;width:755px;height:1px;background:#c9c9c9"></div>
<div class="b" style="left:838px;top:318px;width:749px;height:321px;border-top:1px solid #c9c9c9;border-left:1px solid #c9c9c9;border-right:1px solid #c9c9c9;box-sizing:border-box"></div>
<div class="b" style="left:986px;top:319px;width:1px;height:50px;background:#c9c9c9"></div>
<div class="b" style="left:1135px;top:319px;width:1px;height:50px;background:#c9c9c9"></div>
<div class="b" style="left:1285px;top:319px;width:1px;height:50px;background:#c9c9c9"></div>
<div class="b" style="left:1435px;top:319px;width:1px;height:50px;background:#c9c9c9"></div>
<div class="b" style="left:839px;top:343px;width:747px;height:1px;background:#c9c9c9"></div>
<div class="b" style="left:839px;top:368px;width:747px;height:1px;background:#c9c9c9"></div>
<div class="b" style="left:842px;top:322px;width:142px;height:19px;border-top:1px solid #c9c9c9;border-left:1px solid #c9c9c9;border-bottom:1px solid #c9c9c9;border-right:1px solid #c9c9c9;box-sizing:border-box"></div>
<div class="b" style="left:842px;top:347px;width:142px;height:19px;border-top:1px solid #c9c9c9;border-left:1px solid #c9c9c9;border-bottom:1px solid #c9c9c9;border-right:1px solid #c9c9c9;box-sizing:border-box"></div>
<span class="t" style="left:874px;top:325px;font-size:13px;font-family:'Liberation Serif',serif;">ID da Patrulha</span>
<span class="t" style="left:844.6px;top:350px;font-size:13px;font-family:'Liberation Serif',serif;transform:scaleX(0.953);">[Patrol ID]</span>
<div class="b" style="left:990px;top:322px;width:143px;height:19px;border-top:1px solid #c9c9c9;border-left:1px solid #c9c9c9;border-bottom:1px solid #c9c9c9;border-right:1px solid #c9c9c9;box-sizing:border-box"></div>
<div class="b" style="left:990px;top:347px;width:143px;height:19px;border-top:1px solid #c9c9c9;border-left:1px solid #c9c9c9;border-bottom:1px solid #c9c9c9;border-right:1px solid #c9c9c9;box-sizing:border-box"></div>
<span class="t" style="left:1016.5px;top:325px;font-size:13px;font-family:'Liberation Serif',serif;transform:scaleX(1.016);">Data da Patrulha</span>
<span class="t" style="left:992.6px;top:350px;font-size:13px;font-family:'Liberation Serif',serif;transform:scaleX(0.987);">[Patrol Start Date]</span>
<div class="b" style="left:1139px;top:322px;width:144px;height:19px;border-top:1px solid #c9c9c9;border-left:1px solid #c9c9c9;border-bottom:1px solid #c9c9c9;border-right:1px solid #c9c9c9;box-sizing:border-box"></div>
<div class="b" style="left:1139px;top:347px;width:144px;height:19px;border-top:1px solid #c9c9c9;border-left:1px solid #c9c9c9;border-bottom:1px solid #c9c9c9;border-right:1px solid #c9c9c9;box-sizing:border-box"></div>
<span class="t" style="left:1182px;top:325px;font-size:13px;font-family:'Liberation Serif',serif;transform:scaleX(1.048);">Longitude</span>
<span class="t" style="left:1141.6px;top:350px;font-size:13px;font-family:'Liberation Serif',serif;transform:scaleX(0.942);">[X]</span>
<div class="b" style="left:1289px;top:322px;width:144px;height:19px;border-top:1px solid #c9c9c9;border-left:1px solid #c9c9c9;border-bottom:1px solid #c9c9c9;border-right:1px solid #c9c9c9;box-sizing:border-box"></div>
<div class="b" style="left:1289px;top:347px;width:144px;height:19px;border-top:1px solid #c9c9c9;border-left:1px solid #c9c9c9;border-bottom:1px solid #c9c9c9;border-right:1px solid #c9c9c9;box-sizing:border-box"></div>
<span class="t" style="left:1338px;top:325px;font-size:13px;font-family:'Liberation Serif',serif;transform:scaleX(1.016);">Latitude</span>
<span class="t" style="left:1291.6px;top:350px;font-size:13px;font-family:'Liberation Serif',serif;transform:scaleX(0.887);">[Y]</span>
<div class="b" style="left:1439px;top:322px;width:144px;height:19px;border-top:1px solid #c9c9c9;border-left:1px solid #c9c9c9;border-bottom:1px solid #c9c9c9;border-right:1px solid #c9c9c9;box-sizing:border-box"></div>
<div class="b" style="left:1439px;top:347px;width:144px;height:19px;border-top:1px solid #c9c9c9;border-left:1px solid #c9c9c9;border-bottom:1px solid #c9c9c9;border-right:1px solid #c9c9c9;box-sizing:border-box"></div>
<span class="t" style="left:1475px;top:325px;font-size:13px;font-family:'Liberation Serif',serif;transform:scaleX(1.010);">Classificação</span>
<span class="t" style="left:1441.6px;top:350px;font-size:13px;font-family:'Liberation Serif',serif;transform:scaleX(1.009);">[Observation Cate...]</span>
<div class="b" style="left:842px;top:372px;width:470px;height:267px;border-top:1px solid #c9c9c9;border-left:1px solid #c9c9c9;border-right:1px solid #c9c9c9;box-sizing:border-box"></div>
<svg class="b" style="left:847px;top:376px;" width="14" height="15" viewBox="0 0 14 15"><rect x="0.5" y="0.5" width="13" height="14" fill="#fff" stroke="#2a2a2a"/><path d="M4.6 4.6 L9.4 9.4 M9.4 4.6 L4.6 9.4" stroke="#ee1c25" stroke-width="1.7"/></svg>
<div class="b" style="left:503px;top:639px;width:1125px;height:25px;background:#fff"></div>
<div class="b" style="left:503px;top:639px;width:1125px;height:2px;background:#ebebeb"></div>
<div class="b" style="left:504px;top:641px;width:46px;height:22px;background:#efefef"></div>
<span class="t" style="left:508px;top:644px;">Layout</span>
<span class="t" style="left:554px;top:644px;color:#a0a0a0;transform:scaleX(0.956);">Master Page</span>
<span class="t" style="left:629px;top:644px;color:#a0a0a0;transform:scaleX(0.945);">Script</span>
<span class="t" style="left:668px;top:644px;color:#a0a0a0;transform:scaleX(0.976);">XML Source</span>
<div class="b" style="left:502px;top:669px;width:1130px;height:304px;background:#fff;border:1px solid #9fb5d3;box-sizing:border-box"></div>
<div class="b" style="left:503px;top:670px;width:194px;height:31px;background:#ececec"></div>
<div class="b" style="left:503px;top:701px;width:1125px;height:2px;background:#f0f0f0"></div>
<svg class="b" style="left:508px;top:680px;" width="16" height="15" viewBox="0 0 16 15"><rect x="0.6" y="2.6" width="12.8" height="11.8" fill="#fff8e8" stroke="#8a6d3b" stroke-width="1.1"/><path d="M0.6 10.5 H13.4 M7 10.5 V14.4" stroke="#8a6d3b" stroke-width="1"/><path d="M2.5 5 H9 M2.5 7 H8 M2.5 8.8 H6" stroke="#3a5a9a" stroke-width="0.9"/><path d="M13.5 1.5 L15 3 L9.5 9 L7.5 9.6 L8 7.6 Z" fill="#f2c35a" stroke="#8a6d3b" stroke-width="0.6"/><circle cx="14.4" cy="1.8" r="1.2" fill="#e0605a"/></svg>
<span class="t" style="left:527px;top:681px;transform:scaleX(0.975);">Property Editor - Parameter</span>
<svg class="b" style="left:679px;top:681px;" width="11" height="11" viewBox="0 0 11 11"><path d="M0.6 2 L2 0.6 L5.5 3.6 L9 0.6 L10.4 2 L7.4 5.5 L10.4 9 L9 10.4 L5.5 7.4 L2 10.4 L0.6 9 L3.6 5.5 Z" fill="#fff" stroke="#5a5a5a" stroke-width="0.9" stroke-linejoin="round"/></svg>
<div class="b" style="left:503px;top:703px;width:64px;height:23px;background:#f0f0f0"></div>
<div class="b" style="left:503px;top:726px;width:1125px;height:2px;background:#f0f0f0"></div>
<span class="t" style="left:508px;top:711px;transform:scaleX(0.951);">Properties</span>
<div class="b" style="left:503px;top:728px;width:137px;height:243px;background:#efefef"></div>
<div class="b" style="left:503px;top:738px;width:136px;height:23px;background:#fff"></div>
<div class="b" style="left:503px;top:737px;width:137px;height:1px;background:#7d7d7d"></div>
<div class="b" style="left:639px;top:728px;width:1px;height:243px;background:#8c8c8c"></div>
<span class="t" style="left:511.5px;top:743px;font-weight:bold;transform:scaleX(0.963);">General</span>
<div class="b" style="left:503px;top:761px;width:136px;height:21px;background:linear-gradient(#e2e2d4,#d6d6c6 45%,#c6c6b2);border-top:1px solid #fff;border-bottom:1px solid #9c9c90;box-sizing:border-box"></div>
<span class="t" style="left:511.5px;top:764.5px;transform:scaleX(0.978);">Localization</span>
<div class="b" style="left:503px;top:783px;width:136px;height:21px;background:linear-gradient(#e2e2d4,#d6d6c6 45%,#c6c6b2);border-top:1px solid #fff;border-bottom:1px solid #9c9c90;box-sizing:border-box"></div>
<span class="t" style="left:511.5px;top:786.5px;">Comments</span>
<div class="b" style="left:503px;top:805px;width:136px;height:21px;background:linear-gradient(#e2e2d4,#d6d6c6 45%,#c6c6b2);border-top:1px solid #fff;border-bottom:1px solid #9c9c90;box-sizing:border-box"></div>
<span class="t" style="left:511.5px;top:808.5px;transform:scaleX(0.936);">User Properties</span>
<div class="b" style="left:503px;top:827px;width:136px;height:21px;background:linear-gradient(#e2e2d4,#d6d6c6 45%,#c6c6b2);border-top:1px solid #fff;border-bottom:1px solid #9c9c90;box-sizing:border-box"></div>
<span class="t" style="left:511.5px;top:830.5px;transform:scaleX(0.950);">Named Expressions</span>
<div class="b" style="left:503px;top:849px;width:136px;height:21px;background:linear-gradient(#e2e2d4,#d6d6c6 45%,#c6c6b2);border-top:1px solid #fff;border-bottom:1px solid #9c9c90;box-sizing:border-box"></div>
<span class="t" style="left:511.5px;top:852.5px;transform:scaleX(0.975);">Advanced</span>
<div class="b" style="left:644px;top:732px;width:984px;height:29px;background:linear-gradient(#e2e9f4,#dfe6f1 84%,#fbfcfe);border-top:1px solid #c6d3e6;border-left:1px solid #b4c6e0;border-top-left-radius:5px;box-sizing:border-box"></div>
<span class="t" style="left:654.5px;top:739px;font-size:14px;font-weight:bold;transform:scaleX(0.882);">General</span>
<span class="t" style="left:655.5px;top:772px;transform:scaleX(0.962);">Name:</span>
<div class="b" style="left:730px;top:768px;width:200px;height:19px;background:#fff;border:1px solid #9f9f9f;box-sizing:border-box"></div>
<span class="t" style="left:735px;top:772px;transform:scaleX(0.964);">Patrol ID</span>
<span class="t" style="left:655.5px;top:795px;transform:scaleX(0.941);">Element ID:</span>
<div class="b" style="left:730px;top:791px;width:200px;height:19px;background:#fff;border:1px solid #9f9f9f;box-sizing:border-box"></div>
<span class="t" style="left:735px;top:795px;transform:scaleX(0.949);">888</span>
<span class="t" style="left:655.5px;top:818px;transform:scaleX(0.944);">Data type:</span>
<div class="b" style="left:730px;top:814px;width:200px;height:19px;background:#fff;border:1px solid #9f9f9f;box-sizing:border-box"></div>
<span class="t" style="left:735px;top:818px;transform:scaleX(0.957);">String</span>
<span class="t" style="left:655.5px;top:841px;">Control type:</span>
<div class="b" style="left:730px;top:837px;width:200px;height:19px;background:#fff;border:1px solid #9f9f9f;box-sizing:border-box"></div>
<span class="t" style="left:735px;top:841px;transform:scaleX(0.935);">Text Box</span>
<div class="b" style="left:799px;top:492px;width:644px;height:460px;background:#f0f0f0;border:1px solid #a6a6a6;border-top-color:#d0d0d0;border-radius:8px;box-sizing:border-box;box-shadow:0 14px 34px 2px rgba(0,0,0,.30),0 2px 14px rgba(0,0,0,.16);overflow:hidden">
<div class="b" style="left:-1px;top:0px;width:642px;height:30px;background:#f3f3f3"></div>
<svg class="b" style="left:7px;top:6px;" width="16" height="16" viewBox="0 0 16 16"><rect x="0" y="0" width="16" height="16" rx="3" fill="#fdfdfd"/><path d="M3.2 5.5 C3 3.4 4.8 2.4 6 3 C8.5 2.6 11 3.8 12 6.2 L13.6 9.6 L12.8 10 L11.6 8.4 L11.4 11.6 H10.2 L9.8 9 H7.4 L7 11.8 H5.6 L5.4 8.6 C4.6 8.8 4.4 10 3.6 10.8 L2.8 10.2 C3.6 9 3.3 7.4 3.2 5.5 Z" fill="#34466e"/></svg>
<span class="t" style="left:29px;top:9px;transform:scaleX(0.962);">Edit Parameter</span>
<svg class="b" style="left:621px;top:8px;" width="12" height="12" viewBox="0 0 12 12"><path d="M1 1 L11 11 M11 1 L1 11" stroke="#1a1a1a" stroke-width="1.1"/></svg>
<div class="b" style="left:-1px;top:30px;width:642px;height:66px;background:#fff"></div>
<svg class="b" style="left:561.5px;top:30px;" width="81" height="66" viewBox="0 0 81 66"><defs><linearGradient id="dg" x1="0" y1="0" x2="1" y2="0"><stop offset="0" stop-color="#fbfcff"/><stop offset="1" stop-color="#e3e9f8"/></linearGradient><linearGradient id="dg2" x1="0" y1="0" x2="1" y2="0"><stop offset="0" stop-color="#f6f8fd"/><stop offset="1" stop-color="#d2dbf3"/></linearGradient></defs><path d="M6 66 C12 38 44 8 81 0 V66 Z" fill="url(#dg)"/><path d="M6 66 C8 58 12 52 18 48 C36 32 58 23 81 21 V66 Z" fill="url(#dg2)"/></svg>
<span class="t" style="left:5.5px;top:41px;font-size:13px;font-weight:bold;transform:scaleX(0.986);">Edit Parameter</span>
<span class="t" style="left:10.5px;top:65px;transform:scaleX(0.993);">Define the properties of the report parameter.</span>
<div class="b" style="left:-1px;top:96px;width:642px;height:1px;background:#a0a0a0"></div>
<div class="b" style="left:625px;top:97px;width:1px;height:310px;background:#fcfcfc"></div>
<div class="b" style="left:632.5px;top:115px;width:2.5px;height:140px;background:#8c8c8c;border-radius:1px"></div>
<span class="t" style="left:14.5px;top:115px;transform:scaleX(0.962);">Name:</span>
<div class="b" style="left:15px;top:133px;width:190px;height:21px;background:#fff;border:1px solid #e2e2e2;border-bottom:2px solid #0067c0;border-radius:3px;box-sizing:border-box"></div>
<div class="b" style="left:21px;top:137px;width:1px;height:13px;background:#000"></div>
<span class="t" style="left:21.7px;top:137px;transform:scaleX(0.943);">Patrol ID</span>
<span class="t" style="left:14.5px;top:161px;transform:scaleX(1.005);">Prompt text:</span>
<div class="b" style="left:15px;top:179px;width:190px;height:21px;background:#fff;border:1px solid #e2e2e2;border-bottom:1px solid #8a8a8a;border-radius:3px;box-sizing:border-box"></div>
<span class="t" style="left:14.5px;top:207px;transform:scaleX(0.951);">Data type:</span>
<div class="b" style="left:15px;top:225.5px;width:190px;height:22px;background:#fff;border:1px solid #cfcfcf;border-radius:3px;box-sizing:border-box"></div>
<span class="t" style="left:19.5px;top:231px;transform:scaleX(0.957);">String</span>
<svg class="b" style="left:191px;top:234px;" width="10" height="6" viewBox="0 0 10 6"><path d="M1 1 L5 5 L9 1" fill="none" stroke="#444" stroke-width="0.9"/></svg>
<span class="t" style="left:14.5px;top:255px;transform:scaleX(0.961);">Display type:</span>
<div class="b" style="left:15px;top:273.5px;width:190px;height:22px;background:#fff;border:1px solid #cfcfcf;border-radius:3px;box-sizing:border-box"></div>
<span class="t" style="left:19.5px;top:279px;transform:scaleX(0.935);">Text Box</span>
<svg class="b" style="left:191px;top:282px;" width="10" height="6" viewBox="0 0 10 6"><path d="M1 1 L5 5 L9 1" fill="none" stroke="#444" stroke-width="0.9"/></svg>
<div class="b" style="left:215px;top:115.5px;width:399.5px;height:183px;border:1px solid #dcdcdc;box-sizing:border-box"></div>
<div class="b" style="left:221px;top:110px;width:60px;height:14px;background:#f0f0f0"></div>
<span class="t" style="left:224px;top:111px;transform:scaleX(0.964);">Display As</span>
<span class="t" style="left:223.3px;top:134px;">Help text:</span>
<div class="b" style="left:282.5px;top:129.5px;width:323.5px;height:20px;background:#fff;border:1px solid #e2e2e2;border-bottom:1px solid #8a8a8a;border-radius:3px;box-sizing:border-box"></div>
<span class="t" style="left:223.3px;top:162px;transform:scaleX(0.942);">Format as:</span>
<div class="b" style="left:282.5px;top:158px;width:226.5px;height:20px;background:#efefef;border:1px solid #dedede;border-bottom:1px solid #9a9a9a;border-radius:3px;box-sizing:border-box"></div>
<span class="t" style="left:289px;top:162px;transform:scaleX(1.022);">Unformatted</span>
<div class="b" style="left:515.5px;top:156px;width:90px;height:23px;background:#fdfdfd;border:1px solid #d0d0d0;border-bottom-color:#bcbcbc;border-radius:4px;box-sizing:border-box"></div>
<span class="t" style="left:536.5px;top:162px;transform:scaleX(0.950);">Change...</span>
<div class="b" style="left:282.5px;top:192px;width:323.5px;height:30.5px;border:1px solid #dcdcdc;box-sizing:border-box"></div>
<div class="b" style="left:289px;top:187px;width:112px;height:13px;background:#f0f0f0"></div>
<span class="t" style="left:292px;top:187px;transform:scaleX(1.013);">Preview with format</span>
<span class="t" style="left:419px;top:204.5px;">My String</span>
<span class="t" style="left:223.3px;top:234px;">List Limit:</span>
<div class="b" style="left:282.5px;top:229.5px;width:91px;height:19.5px;background:#f4f4f4;border:1px solid #e4e4e4;border-radius:3px;box-sizing:border-box"></div>
<span class="t" style="left:380px;top:234px;transform:scaleX(0.937);">values</span>
<div class="b" style="left:282.5px;top:255.5px;width:13px;height:13px;background:#0067c0;border-radius:3px"></div>
<svg class="b" style="left:282.5px;top:255.5px;" width="13" height="13" viewBox="0 0 13 13"><path d="M3.3 6.8 L5.6 9 L9.8 4.4" fill="none" stroke="#fff" stroke-width="1.1"/></svg>
<span class="t" style="left:298.5px;top:257px;transform:scaleX(0.929);">Is Required</span>
<div class="b" style="left:366.5px;top:255.5px;width:13px;height:13px;background:#fff;border:1px solid #5f5f5f;border-radius:3px;box-sizing:border-box"></div>
<span class="t" style="left:382.5px;top:257px;transform:scaleX(1.016);">Do not echo input</span>
<div class="b" style="left:282.5px;top:276.5px;width:13px;height:13px;background:#fff;border:1px solid #5f5f5f;border-radius:3px;box-sizing:border-box"></div>
<span class="t" style="left:298.5px;top:278px;">Hidden</span>
<div class="b" style="left:366.5px;top:276.5px;width:13px;height:13px;background:#f6f6f6;border:1px solid #c8c8c8;border-radius:3px;box-sizing:border-box"></div>
<span class="t" style="left:382.5px;top:278px;color:#9a9a9a;transform:scaleX(0.978);">Allow Duplicate Values</span>
<div class="b" style="left:4.5px;top:318.5px;width:615.5px;height:89px;border:1px solid #dcdcdc;border-bottom:none;box-sizing:border-box"></div>
<div class="b" style="left:10px;top:312px;width:108px;height:14px;background:#f0f0f0"></div>
<span class="t" style="left:13px;top:313px;transform:scaleX(0.968);">Selection list values</span>
<div class="b" style="left:52px;top:332.5px;width:13px;height:13px;background:#fff;border:1px solid #b4b4b4;border-radius:50%;box-sizing:border-box"></div>
<div class="b" style="left:55.5px;top:336px;width:6px;height:6px;background:#b0b0b0;border-radius:50%"></div>
<span class="t" style="left:68px;top:333px;color:#8c8c8c;transform:scaleX(0.967);">Static</span>
<div class="b" style="left:161px;top:332.5px;width:13px;height:13px;background:#fafafa;border:1px solid #b4b4b4;border-radius:50%;box-sizing:border-box"></div>
<span class="t" style="left:177px;top:333px;color:#8c8c8c;transform:scaleX(1.017);">Dynamic</span>
<span class="t" style="left:12.5px;top:354px;transform:scaleX(0.968);">Default value:</span>
<div class="b" style="left:89px;top:352px;width:472px;height:20.5px;background:#fff;border:1px solid #bdbdbd;border-bottom:1px solid #8a8a8a;border-radius:2px;box-sizing:border-box"></div>
<div class="b" style="left:543px;top:355px;width:16.5px;height:15.5px;background:#f0f0f0"></div>
<div class="b" style="left:566.5px;top:353px;width:39px;height:17.5px;background:#fdfdfd;border:1px solid #d0d0d0;border-radius:3px;box-sizing:border-box"></div>
<div class="b" style="left:589.5px;top:353.5px;width:1px;height:16.5px;background:#d0d0d0"></div>
<span class="t" style="left:572px;top:357.5px;font-size:10px;color:#1c3358;transform:scaleX(0.948);">ab|</span>
<svg class="b" style="left:594px;top:360px;" width="8" height="5" viewBox="0 0 8 5"><path d="M0.5 0.5 H7.5 L4 4.5 Z" fill="#222"/></svg>
<div class="b" style="left:442px;top:421px;width:90px;height:23px;background:#fdfdfd;border:1.5px solid #0067c0;border-radius:4px;box-sizing:border-box"></div>
<span class="t" style="left:479px;top:427px;transform:scaleX(0.923);">OK</span>
<div class="b" style="left:540px;top:421px;width:90px;height:23px;background:#fdfdfd;border:1px solid #d0d0d0;border-bottom-color:#bcbcbc;border-radius:4px;box-sizing:border-box"></div>
<span class="t" style="left:566.5px;top:427px;transform:scaleX(0.964);">Cancel</span>
</div>
</body></html>
